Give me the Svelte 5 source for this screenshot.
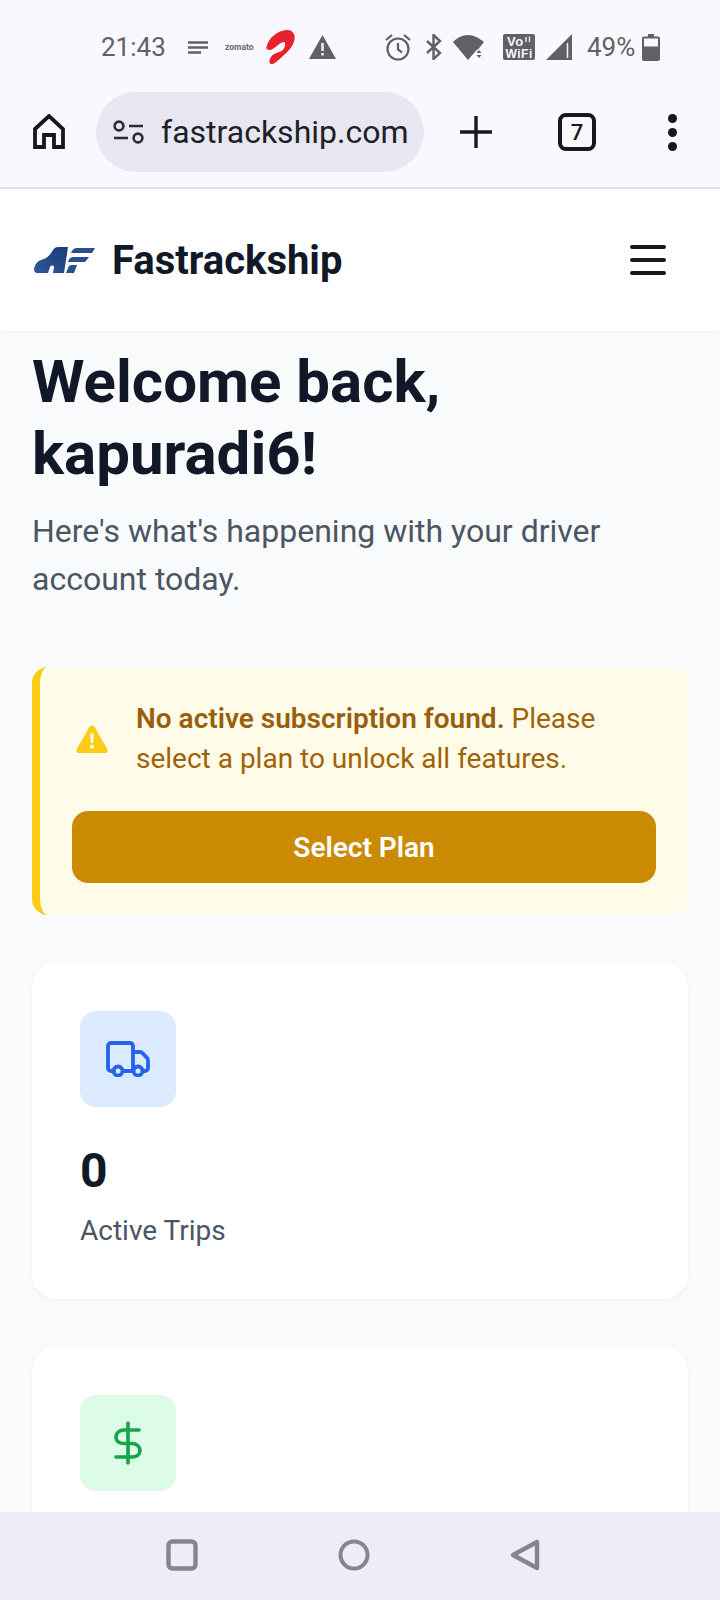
<script>
  const stats = [
    { value: "0", label: "Active Trips", tone: "blue", icon: "truck" },
    { value: "", label: "", tone: "green", icon: "dollar" },
  ];
</script>

<div class="phone">
  <div class="chrome">
    <div class="status">
      <span class="time">21:43</span>
      <svg class="s-lines" width="20" height="13" viewBox="0 0 20 13"><path d="M0 1.5h20M0 6.5h20M0 11.5h13" stroke="#5f6167" stroke-width="2.4" /></svg>
      <span class="zomato">zomato</span>
      <svg class="s-airtel" width="33" height="35" viewBox="0 0 30 36"><path d="M.5 18C2 9 12 0 22 0c6 0 8 5 7.500 9-1 8-7.500 14-13.500 19-4 3.500-8 8-11 7-3-1-1-8 4-10.500 4-2 9-2.500 10-6.500 1.500-5 1-7-3-5-4 2-8 7-12 7.500-2 0-3.500-.5-3.500-2.500z" fill="#e8222a" /></svg>
      <svg class="s-warn" width="27" height="24" viewBox="0 0 27 24"><path d="M13.500 0 27 24H0z" fill="#5f6167" /><path d="M12.300 8h2.400v8h-2.400zM12.300 18h2.400v2.500h-2.400z" fill="#f8f8fe" /></svg>
      <svg class="s-alarm" width="28" height="28" viewBox="0 0 28 28" fill="none" stroke="#5f6167" stroke-width="2.200"><circle cx="14" cy="16" r="10.500" /><path d="M14 10v6.500l4 3M2 7l6-5M26 7l-6-5" /></svg>
      <svg class="s-bt" width="17" height="26" viewBox="0 0 17 26" fill="none" stroke="#5f6167" stroke-width="2.400"><path d="M2 7l13 12-6.500 6V1L15 7 2 19" /></svg>
      <svg class="s-wifi" width="31" height="25" viewBox="0 0 31 25"><path d="M0 7C4 3 9 0 15 0s11 3 16 7l-6 7.500-1 0L15 25z" fill="#5f6167" /><path d="M26 15l2.500 3h-5zM23.500 20h5L26 23z" fill="#5f6167" /></svg>
      <svg class="s-vo" width="32" height="26" viewBox="0 0 32 26">
        <rect width="32" height="26" rx="2" fill="#5f6167" />
        <text x="4" y="12" class="vo-big">Vo</text>
        <text x="2.500" y="23.500" class="vo-text">WiFi</text>
        <path d="M23 3v5M26.500 2.500v5.500" stroke="#f8f8fe" stroke-width="1.300" />
      </svg>
      <svg class="s-signal" width="26" height="26" viewBox="0 0 26 26"><path d="M0 26 26 0v26z" fill="#5f6167" /><path d="M21.500 9v15" stroke="#f8f8fe" stroke-width="1.500" /></svg>
      <span class="batt-text">49%</span>
      <svg class="s-batt" width="18" height="27" viewBox="0 0 18 27"><path d="M6 0h6v2.500h4a2 2 0 0 1 2 2V25a2 2 0 0 1-2 2H2a2 2 0 0 1-2-2V4.500a2 2 0 0 1 2-2h4z" fill="#5f6167" /><rect x="2" y="4.500" width="14" height="8" fill="#f8f8fe" /></svg>
    </div>

    <div class="toolbar">
      <svg class="home" width="32" height="36" viewBox="0 0 32 36" fill="none" stroke="#16181d" stroke-width="3.800">
        <path d="M2 15 16 2l14 13v18H21V21H11v12H2z" />
      </svg>
      <div class="pill">
        <svg width="31" height="24" viewBox="0 0 31 24" fill="none" stroke="#2b2d33" stroke-width="2.600">
          <circle cx="6" cy="6" r="4.400" /><path d="M16 6h14M1 18h14" /><circle cx="25" cy="18" r="4.400" />
        </svg>
        <span>fastrackship.com</span>
      </div>
      <svg class="plus" width="32" height="32" viewBox="0 0 32 32"><path d="M16 0v32M0 16h32" stroke="#16181d" stroke-width="3.400" /></svg>
      <div class="tabs">7</div>
      <div class="dots"><i></i><i></i><i></i></div>
    </div>
  </div>

  <header class="site">
    <div class="brand">
      <svg width="61" height="28" viewBox="0 0 61 28">
        <defs>
          <linearGradient id="lg" x1="0" y1="1" x2="1" y2="0">
            <stop offset="0" stop-color="#2f5797" /><stop offset="1" stop-color="#1c3c77" />
          </linearGradient>
        </defs>
        <path d="M0 23c1-6 5-9 10-10 3-1 6-4 9-9 1-2 3-3 5-3h10L30 27H19l1-6c0-2-3-2-4 0l-2 6H3c-2 0-3-2-3-4z" fill="url(#lg)" />
        <path d="M37 7c1-3 3-5 6-5h18l-3 5zM34 16c1-4 3-5 6-5h15l-4 5zM32 27l2-5c.5-2 2-3 4-3h5l-3 8z" fill="#2a4f8f" />
      </svg>
      <span>Fastrackship</span>
    </div>
    <div class="burger"><i></i><i></i><i></i></div>
  </header>

  <main>
    <h1>Welcome back, kapuradi6!</h1>
    <p class="sub">Here's what's happening with your driver account today.</p>

    <section class="alert">
      <div class="alert-row">
        <svg width="32" height="30" viewBox="0 0 32 28">
          <path d="M13.400 2a3 3 0 0 1 5.200 0l12.600 22a2.600 2.600 0 0 1-2.300 4H3.100a2.600 2.600 0 0 1-2.300-4z" fill="#facc15" />
          <path d="M14.300 8.500h3.400l-.4 9.500h-2.600zM14.300 20h3.400v3.400h-3.400z" fill="#fffdf0" />
        </svg>
        <p><strong>No active subscription found.</strong> Please select a plan to unlock all features.</p>
      </div>
      <button>Select Plan</button>
    </section>

    {#each stats as s}
      <section class="card">
        <div class="badge {s.tone}">
          {#if s.icon === "truck"}
            <svg width="44" height="36" viewBox="0 0 44 36" fill="none" stroke="#2563eb" stroke-width="3.800" stroke-linejoin="round" stroke-linecap="round">
              <path d="M8 30H5a3 3 0 0 1-3-3V5a3 3 0 0 1 3-3h19a3 3 0 0 1 3 3v25H17" />
              <path d="M27 11h7c1 0 2 .5 3 1.500l4.500 5c.5.700.5 1.500.5 2.500v7a3 3 0 0 1-3 3h-2M27 30h0" />
              <circle cx="12" cy="30" r="4.500" /><circle cx="32" cy="30" r="4.500" />
              <path d="M17 30h10.500" />
            </svg>
          {:else}
            <svg width="28" height="44" viewBox="0 0 28 44" fill="none" stroke="#16a34a" stroke-width="3.600" stroke-linecap="round">
              <path d="M14 2v40M25 9H10C5.500 9 2 12 2 16s3.500 6.500 8 6.500h8c4.500 0 8 3 8 7s-3.500 6.500-8 6.500H2" />
            </svg>
          {/if}
        </div>
        {#if s.value}
          <div class="value">{s.value}</div>
          <div class="label">{s.label}</div>
        {/if}
      </section>
    {/each}
  </main>

  <nav class="sysnav">
    <svg width="32" height="32" viewBox="0 0 32 32" fill="none" stroke="#85868d" stroke-width="4.400"><rect x="2.500" y="2.500" width="27" height="27" rx="4" /></svg>
    <svg width="32" height="32" viewBox="0 0 32 32" fill="none" stroke="#85868d" stroke-width="4"><circle cx="16" cy="16" r="13.500" /></svg>
    <svg width="30" height="32" viewBox="0 0 30 32" fill="none" stroke="#85868d" stroke-width="4.400" stroke-linejoin="round"><path d="M3 16 27 3v26z" /></svg>
  </nav>
</div>

<style>
  :global(body) { margin: 0; background: #f9fafb; }
  .phone { width: 720px; height: 1600px; display: flex; flex-direction: column; overflow: hidden;
    font-family: Roboto, "Liberation Sans", sans-serif; color: #111827; }

  .chrome { background: #f8f8fe; border-bottom: 2px solid #e2e3e8; height: 187px; flex: none; }
  .status { height: 92px; box-sizing: border-box; padding: 2px 0 0 101px; display: flex; align-items: center; color: #5f6167; }
  .time { font-size: 26px; width: 64px; white-space: nowrap; }
  .s-lines { margin-left: 23px; }
  .zomato { font-size: 8.500px; font-weight: 700; width: 28px; margin-left: 17px; color: #66686e; }
  .s-airtel { margin-left: 11px; }
  .s-warn { margin-left: 12px; }
  .s-alarm { margin-left: 48px; }
  .s-bt { margin-left: 13px; }
  .s-wifi { margin-left: 11px; }
  .s-vo { margin-left: 19px; }
  .vo-text { font-size: 12px; font-weight: 700; fill: #f8f8fe; font-family: "Liberation Sans", sans-serif; letter-spacing: .5px; }
  .vo-big { font-size: 13px; font-weight: 700; fill: #f8f8fe; font-family: "Liberation Sans", sans-serif; letter-spacing: .5px; }
  .s-signal { margin-left: 11px; }
  .batt-text { font-size: 26px; margin-left: 15px; width: 49px; white-space: nowrap; }
  .s-batt { margin-left: 6px; }

  .toolbar { display: flex; align-items: center; height: 80px; padding-left: 33px; }
  .home { flex: none; }
  .pill { width: 328px; height: 80px; margin-left: 31px; box-sizing: border-box; padding-left: 17px; border-radius: 40px;
    background: #e6e7f0; display: flex; align-items: center; gap: 17px; color: #1e2026; }
  .pill span { font-size: 32px; white-space: nowrap; }
  .plus { margin-left: 36px; }
  .tabs { width: 30px; height: 30px; margin-left: 66px; border: 4px solid #16181d; border-radius: 8px; display: flex;
    align-items: center; justify-content: center; font-size: 22px; font-weight: 500; color: #16181d; }
  .dots { margin-left: 72px; display: flex; flex-direction: column; gap: 5px; }
  .dots i { width: 9px; height: 9px; border-radius: 50%; background: #16181d; display: block; }

  .site { height: 142px; flex: none; background: #fff; display: flex; align-items: center; justify-content: space-between;
    padding: 0 54px 0 34px; box-shadow: 0 1px 4px rgba(0,0,0,.06); position: relative; }
  .brand { display: flex; align-items: center; gap: 17px; }
  .brand span { font-size: 40px; font-weight: 700; color: #111827; }
  .burger { display: flex; flex-direction: column; gap: 9px; }
  .burger i { width: 36px; height: 4px; border-radius: 2px; background: #1a1a1a; display: block; }

  main { flex: 1; min-height: 0; overflow: hidden; padding: 15px 32px 0; }
  h1 { margin: 0; font-size: 60px; line-height: 72px; font-weight: 700; color: #111827; }
  .sub { margin: 17px 0 0; font-size: 32px; line-height: 48px; color: #4b5563; }

  .alert { margin-top: 64px; background: #fefce8; border-left: 8px solid #facc15; border-radius: 16px;
    padding: 32px; }
  .alert-row { display: flex; align-items: center; gap: 28px; padding-left: 4px; }
  .alert-row svg { flex: none; }
  .alert-row p { margin: 0; font-size: 28px; line-height: 40px; color: #a16207; }
  .alert-row strong { font-weight: 600; color: #9a5f0d; }
  button { display: block; width: 100%; height: 72px; margin-top: 32px; border: 0; border-radius: 16px; background: #ca8a04;
    color: #fff; font: 600 28px Roboto, sans-serif; }

  .card { margin-top: 48px; background: #fff; border-radius: 24px; padding: 48px 48px 44px; box-shadow: 0 1px 3px rgba(0,0,0,.06); }
  .badge { width: 96px; height: 96px; border-radius: 16px; display: flex; align-items: center; justify-content: center; }
  .blue { background: #dbeafe; }
  .green { background: #dcfce7; }
  .value { margin-top: 28px; font-size: 48px; line-height: 72px; font-weight: 700; color: #111827; }
  .label { font-size: 28px; line-height: 48px; color: #4b5563; }

  .sysnav { height: 88px; box-sizing: border-box; flex: none; background: #ecedf7; display: flex; align-items: center;
    padding: 0 0 2px 166px; gap: 140px; position: relative; }
</style>
